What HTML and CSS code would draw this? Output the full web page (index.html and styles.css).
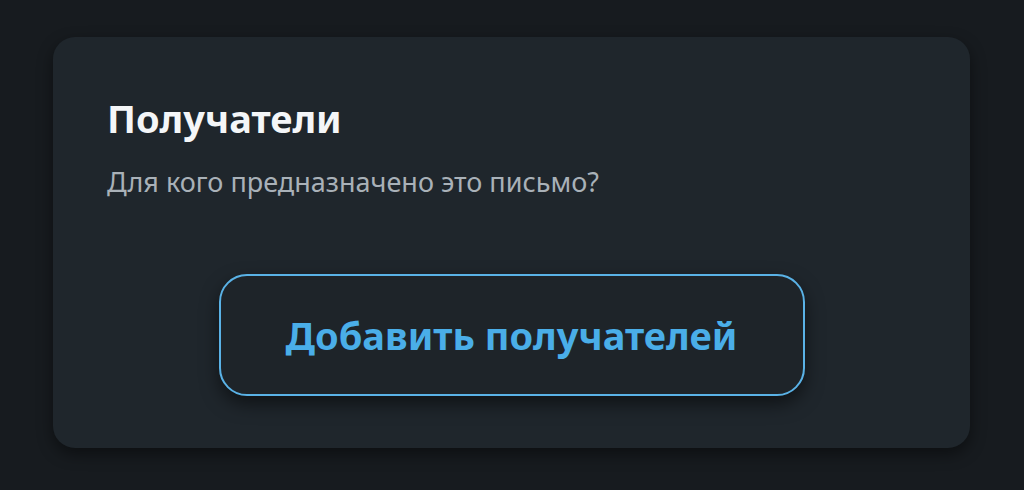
FILE: index.html
```html
<!DOCTYPE html>
<html lang="ru">

<head>
    <meta charset="UTF-8">
    <title>Получатели</title>
    <link rel="stylesheet" href="styles.css">
</head>

<body>

    <div class="card">
        <h2 class="card-title">Получатели</h2>
        <p class="card-subtitle">Для кого предназначено это письмо?</p>
        <div class="card-actions">
            <button class="add-btn">Добавить получателей</button>
        </div>
    </div>

</body>

</html>
```

FILE: styles.css
```css
body {
    margin: 0;
    height: 490px;
    background: #171b1f;
    font-family: 'Noto Sans', sans-serif;
    padding: 37px 54px 0 53px;
    box-sizing: border-box;
}

.card {
    height: 411px;
    box-sizing: border-box;
    background: #1f262c;
    border-radius: 22px;
    padding: 57px 54px 0 54px;
    box-shadow: 0 6px 16px rgba(0, 0, 0, 0.45);
}

.card-title {
    margin: 0;
    color: #f4f6f8;
    font-size: 38px;
    font-weight: 700;
    line-height: 48px;
}

.card-subtitle {
    margin: 23px 0 0 0;
    color: #a9b1b8;
    font-size: 27px;
    line-height: 34px;
}

.card-actions {
    display: flex;
    justify-content: center;
    margin-top: 75px;
}

.add-btn {
    width: 586px;
    height: 122px;
    background: #1e2429;
    border: 2px solid #5ab2e6;
    border-radius: 28px;
    color: #4aaee8;
    font-family: 'Noto Sans', sans-serif;
    font-size: 38px;
    font-weight: 700;
    cursor: pointer;
    box-shadow: 0 8px 18px rgba(0, 0, 0, 0.5);
}
```
